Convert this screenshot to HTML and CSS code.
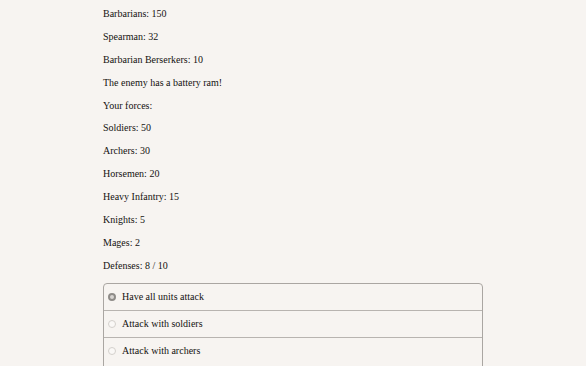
FILE: index.html
```html
<!DOCTYPE html>
<html lang="en">
<head>
    <meta charset="UTF-8">
    <meta name="viewport" content="width=device-width, initial-scale=1.0">
    <title>Battle</title>
    <link rel="stylesheet" href="styles.css">
</head>
<body>
    <div id="story">
        <p>Barbarians: 150</p>
        <p>Spearman: 32</p>
        <p>Barbarian Berserkers: 10</p>
        <p>The enemy has a battery ram!</p>
        <p>Your forces:</p>
        <p>Soldiers: 50</p>
        <p>Archers: 30</p>
        <p>Horsemen: 20</p>
        <p>Heavy Infantry: 15</p>
        <p>Knights: 5</p>
        <p>Mages: 2</p>
        <p>Defenses: 8 / 10</p>

        <div id="choices">
            <div class="choice selected"><span class="radio"></span>Have all units attack</div>
            <div class="choice"><span class="radio"></span>Attack with soldiers</div>
            <div class="choice"><span class="radio"></span>Attack with archers</div>
        </div>
    </div>
</body>
</html>
```

FILE: styles.css
```css
body {
    font-family: 'Liberation Serif', 'DejaVu Serif', serif;
    background-color: #f7f4f1;
    color: #141210;
    margin: 0;
}
#story {
    width: 380px;
    margin: 0 auto;
    padding-top: 7px;
}
#story p {
    font-size: 10px;
    line-height: 13px;
    margin: 0 0 9.9px;
}
#choices {
    margin-top: 11px;
    border: 1px solid #aaa6a2;
    border-radius: 4px;
}
.choice {
    display: flex;
    align-items: center;
    height: 26px;
    padding-left: 4px;
    font-size: 10px;
    border-top: 1px solid #b8b4b0;
}
.choice:first-child {
    border-top: none;
}
.choice:last-child {
    height: 26px;
    padding-bottom: 8px;
}
.radio {
    width: 6px;
    height: 6px;
    border: 1px solid #d4d0cc;
    border-radius: 50%;
    background-color: #faf8f6;
    margin-right: 6px;
}
.selected .radio {
    width: 4px;
    height: 4px;
    border: 2px solid #8f8c89;
    background-color: #d8d5d2;
}
```
